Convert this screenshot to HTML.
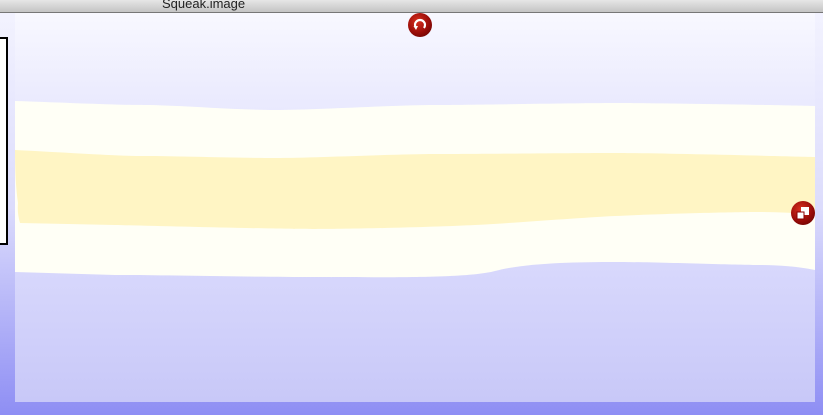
<!DOCTYPE html>
<html><head><style>
body{margin:0;width:823px;height:415px;overflow:hidden;position:relative;background:linear-gradient(#f4f4ff 0%,#dcdcfc 50%,#8e8ef4 100%);font-family:"Liberation Sans",sans-serif}
#tb{position:absolute;left:0;top:0;width:823px;height:12px;background:linear-gradient(#e6e6e6,#c4c4c4);border-bottom:1px solid #777;overflow:hidden}
#tb span{position:absolute;left:162px;top:-4px;font-size:13px;color:#222}
#panel{position:absolute;left:15px;top:13px;width:800px;height:389px;background:linear-gradient(#f8f8ff 0%,#e6e6fe 30%,#d8d8fc 65%,#c8c8f8 100%)}
#box{position:absolute;left:-2px;top:37px;width:6px;height:204px;border:2px solid #000;background:#fff}
.btn{position:absolute;width:24px;height:24px;border-radius:50%;background:radial-gradient(circle at 40% 35%,#d83020,#980c08 55%,#500 100%)}
</style></head><body>
<div id="tb"><span>Squeak.image</span></div>
<div id="box"></div>
<div id="panel">
<svg width="800" height="389" style="position:absolute;left:0;top:0">
<path d="M0 88 C60 90 100 92 130 92 S220 97 260 97 S380 92 420 92 S560 90 600 90 S760 92 800 93 L800 257 C780 253 760 252 740 252 S640 249 600 249 S510 250 480 258 S360 264 300 264 S140 262 100 262 L0 259 Z" fill="#fffff6"/>
<path d="M0 137 C60 140 100 143 130 143 S220 145 260 145 S380 141 420 141 S560 140 600 140 S760 143 800 144 L800 201 C780 200 760 199 740 199 S640 201 600 203 S500 210 460 212 S340 216 300 216 S140 213 100 212 L5 210 Q2 200 3 190 Q0 170 0 137 Z" fill="#fff5c4"/>
</svg>
<div class="btn" style="left:393px;top:0px"><svg width="24" height="24"><path d="M8 15 A5 5 0 1 1 16 15" fill="none" stroke="#fff" stroke-width="2.2"/><path d="M5.5 13 L10 13 L8 17 Z" fill="#fff"/></svg></div>
<div class="btn" style="left:776px;top:188px"><svg width="24" height="24"><rect x="10" y="6" width="8" height="8" fill="#fff"/><rect x="6" y="11" width="7" height="7" fill="#fff" stroke="#800" stroke-width="1"/></svg></div>
</div>
</body></html>
